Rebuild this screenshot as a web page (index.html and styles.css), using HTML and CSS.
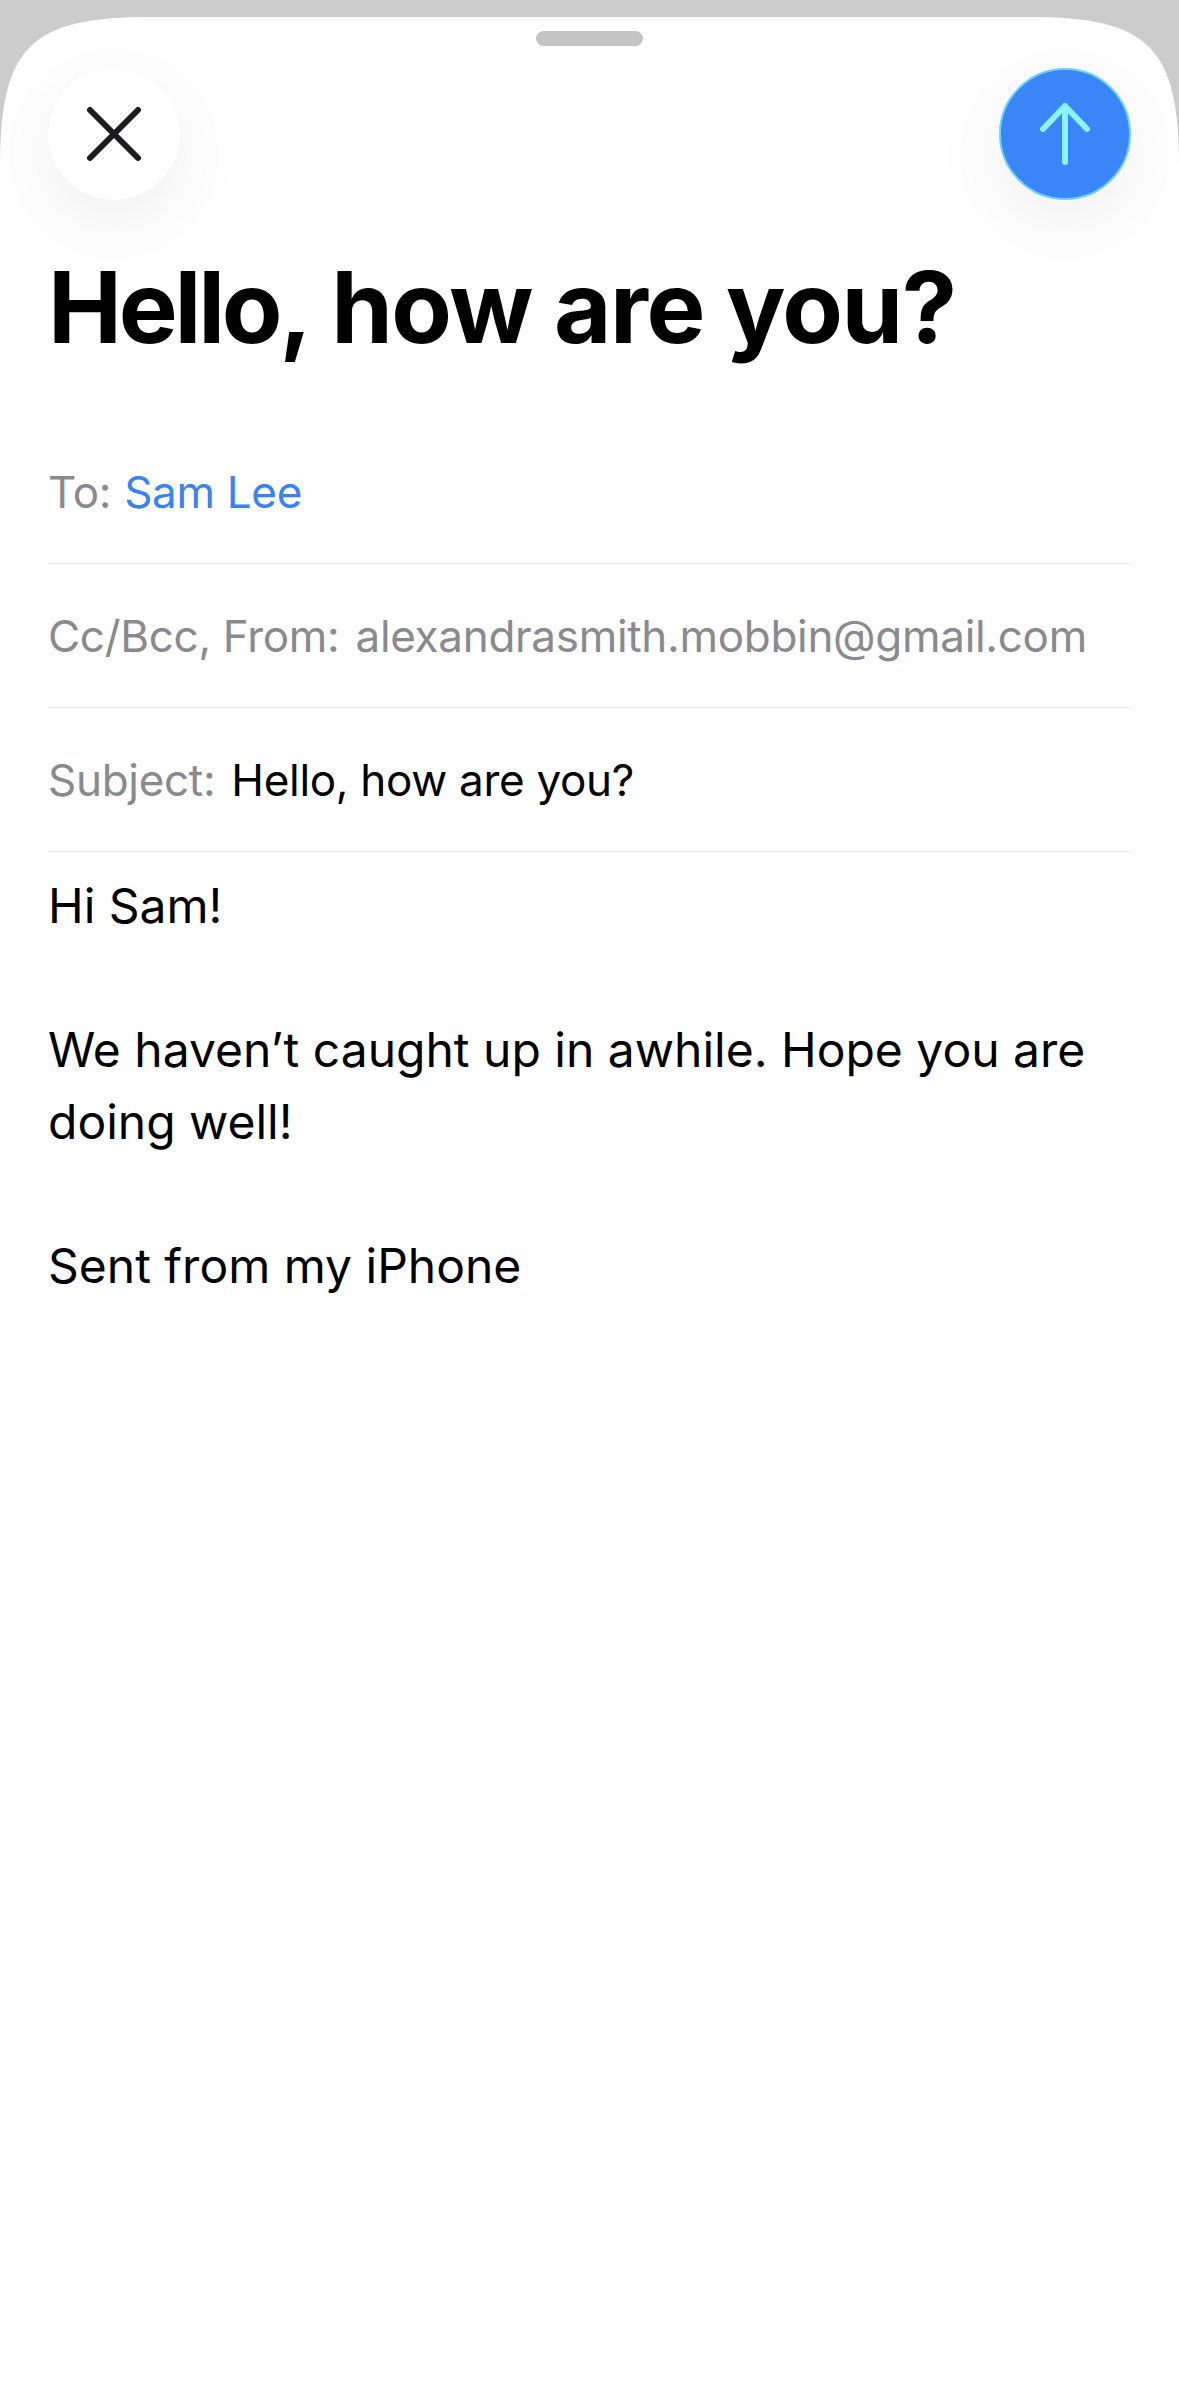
FILE: index.html
```html
<!DOCTYPE html>
<html lang="en">
<head>
    <meta charset="UTF-8">
    <meta name="viewport" content="width=device-width, initial-scale=1.0">
    <title>New Message</title>
    <link rel="stylesheet" href="styles.css">
</head>
<body>
    <div class="sheet">
        <div class="handle"></div>
        <div class="toolbar">
            <button class="round-btn close-btn">
                <svg width="56" height="56" viewBox="0 0 56 56">
                    <path d="M4 4L52 52M52 4L4 52" stroke="#1c1c1e" stroke-width="6" stroke-linecap="round" fill="none"/>
                </svg>
            </button>
            <button class="round-btn send-btn">
                <svg width="52" height="64" viewBox="0 0 52 64">
                    <path d="M26 60V4M4 27L26 4L48 27" stroke="#8af3ff" stroke-width="6" stroke-linecap="round" stroke-linejoin="round" fill="none"/>
                </svg>
            </button>
        </div>
        <h1 class="title"><span class="title-first">Hello,</span> how are you?</h1>
        <div class="fields">
            <div class="field">
                <span class="label">To:</span>
                <span class="recipient">Sam Lee</span>
            </div>
            <div class="field">
                <span class="label">Cc/Bcc, From:</span>
                <span class="sender">alexandrasmith.mobbin@gmail.com</span>
            </div>
            <div class="field">
                <span class="label">Subject:</span>
                <span class="subject">Hello, how are you?</span>
            </div>
        </div>
        <div class="message">
            <p>Hi Sam!</p>
            <p>We haven’t caught up in awhile. Hope you are doing well!</p>
            <p>Sent from my iPhone</p>
        </div>
    </div>
</body>
</html>
```

FILE: styles.css
```css
body {
    font-family: Inter, "Liberation Sans", sans-serif;
    margin: 0;
    padding: 0;
    background-color: #cccccc;
    color: #000;
}

.sheet {
    margin-top: 17px;
    height: 2379px;
    box-sizing: border-box;
    padding: 14px 48px 0;
    background-color: #fff;
    clip-path: path("M0 2379V150C0 30 30 0 150 0H1029C1149 0 1179 30 1179 150V2379Z");
}

.handle {
    width: 107px;
    height: 15px;
    margin: 0 auto;
    border-radius: 8px;
    background-color: #c4c4c4;
}

.toolbar {
    display: flex;
    justify-content: space-between;
    margin-top: 22px;
}

.round-btn {
    display: flex;
    align-items: center;
    justify-content: center;
    width: 132px;
    height: 132px;
    padding: 0;
    border: none;
    border-radius: 50%;
    box-shadow: 0 20px 80px rgba(0, 0, 0, 0.07);
}

.close-btn {
    background-color: #fff;
}

.send-btn {
    background-color: #3a85f7;
    border: 2px solid #6cd0fb;
    box-sizing: border-box;
}

.title {
    margin: 45px 0 0;
    font-size: 99px;
    line-height: 124px;
    font-weight: 700;
    letter-spacing: -1.45px;
}

.title-first {
    letter-spacing: -3.2px;
}

.fields {
    margin-top: 51px;
}

.field {
    display: flex;
    align-items: center;
    gap: 16px;
    height: 143px;
    font-size: 44px;
    letter-spacing: -0.3px;
    border-bottom: 1px solid #e6e6e6;
}

.label {
    color: #8a8a8e;
}

.recipient {
    margin-left: -3px;
    color: #3a82ee;
}

.sender {
    color: #8a8a8e;
}

.message {
    margin-top: 18px;
    font-size: 48px;
    line-height: 72px;
}

.message p {
    margin: 0 0 72px;
}
```
